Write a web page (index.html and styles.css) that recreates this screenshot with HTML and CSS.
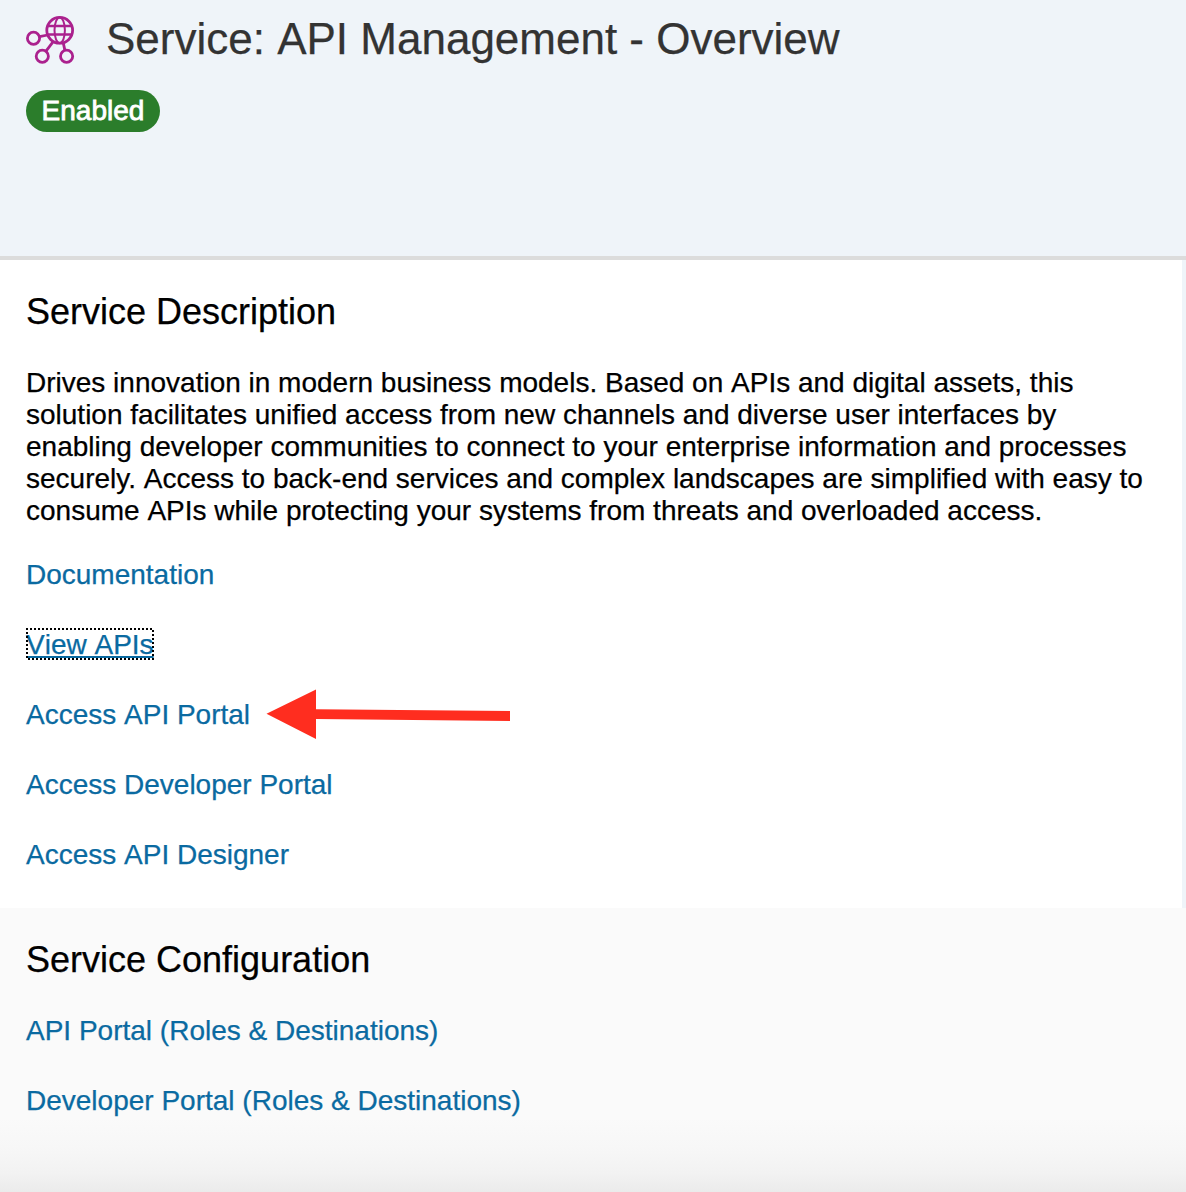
FILE: index.html
```html
<!DOCTYPE html>
<html lang="en">
<head>
<meta charset="utf-8">
<title>Service: API Management - Overview</title>
<link rel="stylesheet" href="styles.css">
</head>
<body>
<div class="page">
  <header class="header">
    <div class="title-row">
      <svg class="service-icon" width="50" height="50" viewBox="0 0 50 50" fill="none" stroke="#ab218e" stroke-width="2.8">
        <circle cx="33.7" cy="15.3" r="12.9"/>
        <ellipse cx="33.7" cy="15.3" rx="5.2" ry="12.9" stroke-width="2"/>
        <path d="M22 11h23.4M22 19.5h23.4" stroke-width="2.4"/>
        <circle cx="7.5" cy="23.3" r="6.1"/>
        <circle cx="16.3" cy="41.3" r="6.1"/>
        <circle cx="40.6" cy="41.3" r="6.1"/>
        <path d="M13.6 21.7l8-1.7M20 36.1l7.2-9.4M37.2 27.5l1.7 7.9"/>
      </svg>
      <h1 class="title">Service: API Management - Overview</h1>
    </div>
    <span class="badge">Enabled</span>
  </header>
  <main class="description">
    <h2 class="heading">Service Description</h2>
    <p class="text">Drives innovation in modern business models. Based on APIs and digital assets, this solution facilitates unified access from new channels and diverse user interfaces by enabling developer communities to connect to your enterprise information and processes <span class="kerned">securely.</span> Access to back-end services and complex landscapes are simplified with easy to consume APIs while protecting your systems from threats and overloaded access.</p>
    <nav class="links">
      <a class="link">Documentation</a>
      <a class="link focused">View APIs<svg class="focus-ring" width="128" height="32"><rect x="1" y="1" width="126" height="30" fill="none" stroke="#000" stroke-width="2" stroke-dasharray="2 2" stroke-dashoffset="1"/></svg></a>
      <a class="link">Access API Portal<svg class="arrow" width="246" height="52" fill="#ff2d1f"><path d="M0.5 25.8L50 1.4V21.2L244 23V33L50 31V51Z"/></svg></a>
      <a class="link">Access Developer Portal</a>
      <a class="link">Access API Designer</a>
    </nav>
  </main>
  <section class="configuration">
    <h2 class="heading">Service Configuration</h2>
    <nav class="links">
      <a class="link">API Portal (Roles &amp; Destinations)</a>
      <a class="link">Developer Portal (Roles &amp; Destinations)</a>
    </nav>
  </section>
</div>
</body>
</html>
```
FILE: styles.css
```css
* { box-sizing: border-box; }
body {
  margin: 0;
  font-family: "Liberation Sans", Arial, sans-serif;
  font-size: 28px;
  line-height: 32px;
  color: #000;
  font-kerning: none;
  -webkit-text-stroke: 0.25px currentColor;
}
h1, h2, p { margin: 0; font-weight: normal; }
.kerned { font-kerning: normal; }
.page {
  height: 1192px;
  display: flex;
  flex-direction: column;
  overflow: hidden;
  background: #eff4f9;
}
.header {
  height: 260px;
  padding: 14px 26px 0;
  border-bottom: 4px solid #dcdcdc;
}
.title-row {
  display: flex;
  align-items: flex-start;
  gap: 30px;
  height: 51px;
}
.service-icon {
  flex: none;
  margin-top: 1px;
}
.title {
  font-size: 44px;
  line-height: 50px;
  color: #333;
  white-space: nowrap;
}
.badge {
  display: block;
  width: 134px;
  height: 42px;
  margin-top: 25px;
  border-radius: 21px;
  background: #2b7d2b;
  color: #fff;
  line-height: 41px;
  text-align: center;
  -webkit-text-stroke: 0.8px #fff;
}
.description {
  height: 648px;
  margin-right: 4px;
  padding: 31px 26px 0;
  background: #fff;
}
.heading {
  font-size: 36px;
  line-height: 41px;
}
.text { margin-top: 35px; }
.links {
  display: flex;
  flex-direction: column;
  align-items: flex-start;
  gap: 38px;
  margin-top: 32px;
}
.link {
  position: relative;
  color: #0a6aa1;
  white-space: nowrap;
}
.focused {
  text-decoration: underline;
  text-decoration-thickness: 2px;
  text-underline-offset: 2px;
}
.focus-ring {
  position: absolute;
  left: 0;
  top: -1px;
}
.arrow {
  position: absolute;
  left: 240px;
  top: -11px;
}
.configuration {
  flex: 1;
  padding: 31px 26px 0;
  background: linear-gradient(to bottom, #fafafa 0, #fafafa 210px, #f7f7f7 240px, #f2f2f2 265px, #ebebeb 284px);
}
.configuration .links { margin-top: 35px; }
```
